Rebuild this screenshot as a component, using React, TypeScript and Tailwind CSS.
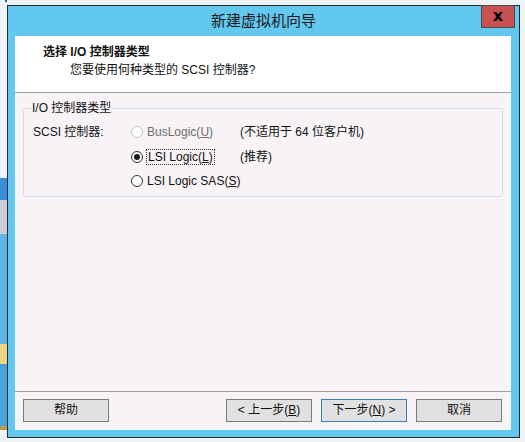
const font = { fontFamily: '"Liberation Sans", "Noto Sans CJK SC", sans-serif' };

function Radio({ checked, disabled }: { checked?: boolean; disabled?: boolean }) {
  return (
    <span
      className={`flex h-[12px] w-[12px] shrink-0 items-center justify-center rounded-full border bg-white ${
        disabled ? "border-[#c4c4c4] bg-[#f4f4f4]" : "border-[#333333]"
      }`}
    >
      {checked && <span className="h-[6px] w-[6px] rounded-full bg-[#1a1a1a]" />}
    </span>
  );
}

function Btn({ children, primary }: { children: React.ReactNode; primary?: boolean }) {
  return (
    <button
      className={`flex h-[23px] w-[86px] items-center justify-center border bg-[#e1e1e1] text-[12px] text-[#111] ${
        primary ? "border-[#3c7fb1]" : "border-[#7a7a7a]"
      }`}
    >
      {children}
    </button>
  );
}

export default function App() {
  return (
    <div className="flex h-[442px] w-[525px] overflow-hidden bg-[#eef3f8] text-[12px]" style={font}>
      {/* desktop peeking out on the left */}
      <div className="flex w-[7px] shrink-0 flex-col">
        <div className="ml-[5px] h-[2px] w-[2px] bg-[#2d5fa0]" />
        <div className="h-[176px]" />
        <div className="h-[22px] bg-[#3a8ed6]" />
        <div className="h-[34px] bg-[#c9cfd4]" />
        <div className="h-[110px] bg-[#5fb4e4]" />
        <div className="h-[20px] bg-[#ead786]" />
        <div className="h-[62px] bg-[#4aa2da]" />
        <div className="h-[4px] bg-[#b89a4a]" />
      </div>

      <div className="mt-[5px] flex h-[433px] w-[513px] shrink-0 flex-col border border-[#2a2a2a] bg-[#62c8ef]">
        {/* title bar */}
        <div className="relative flex h-[30px] shrink-0 items-center justify-center">
          <span className="text-[15px] text-[#1a1a1a]">新建虚拟机向导</span>
          <div className="absolute right-[4px] top-[-1px] flex h-[23px] w-[34px] items-center justify-center border border-[#4a4a4a] bg-[#c75050]">
            <span
              className="pb-[2px] text-[16px] font-bold leading-none text-black"
              style={{ fontFamily: '"DejaVu Sans", sans-serif' }}
            >
              x
            </span>
          </div>
        </div>

        {/* client area */}
        <div className="ml-[7px] mr-[8px] flex h-[394px] flex-col bg-[#f7f3f7]">
          {/* header */}
          <div className="flex h-[57px] shrink-0 flex-col border-b border-[#a0a0a0] bg-white pl-[28px] pt-[8px]">
            <span className="font-bold leading-[16px] text-[#111]">选择 I/O 控制器类型</span>
            <span className="mt-[2px] pl-[27px] leading-[16px] text-[#111]">您要使用何种类型的 SCSI 控制器?</span>
          </div>

          {/* body */}
          <div className="flex flex-1 flex-col px-[8px] pt-[15px]">
            <div className="relative h-[89px] w-[480px] rounded-[3px] border border-[#d5dee5]">
              <span className="absolute left-[7px] top-[-9px] bg-[#f7f3f7] px-[1px] leading-[16px] text-[#111]">
                I/O 控制器类型
              </span>
              <div className="flex flex-col pt-[11px]">
                <div className="flex h-[24px] items-center">
                  <span className="w-[107px] pl-[9px] text-[#111]">SCSI 控制器:</span>
                  <Radio disabled />
                  <span className="ml-[4px] w-[93px] text-[#6d6d6d]">
                    BusLogic(<span className="underline">U</span>)
                  </span>
                  <span className="text-[#111]">(不适用于 64 位客户机)</span>
                </div>
                <div className="flex h-[25px] items-center">
                  <span className="w-[107px]" />
                  <Radio checked />
                  <span className="ml-[3px] w-[94px]">
                    <span className="border border-dotted border-[#333] px-[1px] leading-[15px] text-[#111]">
                      LSI Logic(<span className="underline">L</span>)
                    </span>
                  </span>
                  <span className="text-[#111]">(推荐)</span>
                </div>
                <div className="flex h-[24px] items-center">
                  <span className="w-[107px]" />
                  <Radio />
                  <span className="ml-[4px] text-[#111]">
                    LSI Logic SAS(<span className="underline">S</span>)
                  </span>
                </div>
              </div>
            </div>
          </div>

          {/* footer */}
          <div className="flex h-[39px] shrink-0 items-center border-t border-[#a0a0a0] px-[8px] pb-[2px]">
            <Btn>帮助</Btn>
            <div className="flex-1" />
            <div className="flex gap-[9px]">
              <Btn>
                &lt; 上一步(<span className="underline">B</span>)
              </Btn>
              <Btn primary>
                下一步(<span className="underline">N</span>) &gt;
              </Btn>
              <Btn>取消</Btn>
            </div>
            <div className="w-[1px]" />
          </div>
        </div>
      </div>
      <div className="flex-1" />
    </div>
  );
}
